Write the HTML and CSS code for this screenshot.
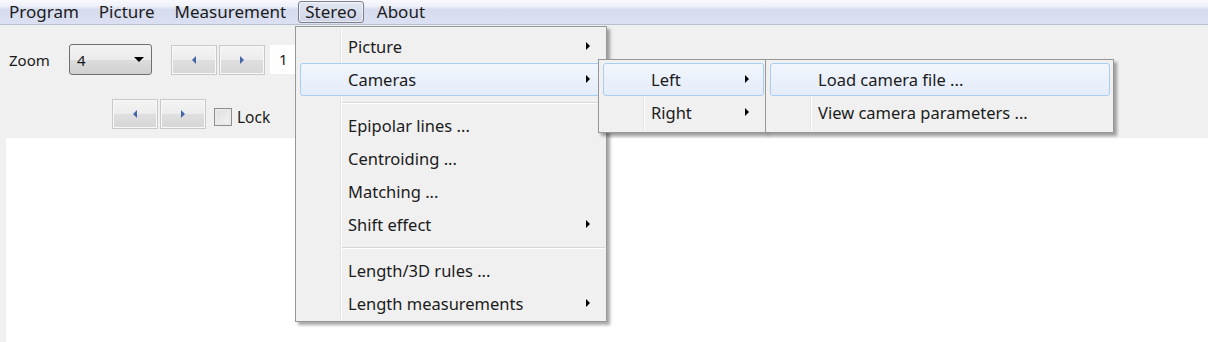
FILE: index.html
```html
<!DOCTYPE html>
<html>
<head>
    <meta charset="utf-8">
    <title>Stereo</title>
    <link rel="stylesheet" href="styles.css">
</head>
<body>
    <div class="menubar">
        <span class="menubar-item">Program</span>
        <span class="menubar-item">Picture</span>
        <span class="menubar-item">Measurement</span>
        <span class="menubar-item open">Stereo</span>
        <span class="menubar-item">About</span>
    </div>

    <div class="toolbar">
        <div class="tool-row">
            <span class="label">Zoom</span>
            <div class="combo">
                <span>4</span>
                <span class="combo-arrow"></span>
            </div>
            <div class="btn-group">
                <button class="nav-btn"><span class="tri left"></span></button>
                <button class="nav-btn"><span class="tri right"></span></button>
            </div>
            <div class="textbox">1</div>
        </div>
        <div class="tool-row second">
            <div class="btn-group">
                <button class="nav-btn"><span class="tri left"></span></button>
                <button class="nav-btn"><span class="tri right"></span></button>
            </div>
            <label class="check"><span class="box"></span>Lock</label>
        </div>
    </div>

    <div class="canvas"></div>

    <!-- Stereo dropdown -->
    <div class="menu main-menu">
        <div class="menu-item sub">Picture</div>
        <div class="menu-item sub active">Cameras</div>
        <div class="menu-sep"></div>
        <div class="menu-item">Epipolar lines ...</div>
        <div class="menu-item">Centroiding ...</div>
        <div class="menu-item">Matching ...</div>
        <div class="menu-item sub">Shift effect</div>
        <div class="menu-sep"></div>
        <div class="menu-item">Length/3D rules ...</div>
        <div class="menu-item sub">Length measurements</div>
    </div>

    <div class="menu cam-menu">
        <div class="menu-item sub active">Left</div>
        <div class="menu-item sub">Right</div>
    </div>

    <div class="menu left-menu">
        <div class="menu-item active">Load camera file ...</div>
        <div class="menu-item">View camera parameters ...</div>
    </div>
</body>
</html>
```

FILE: styles.css
```css
html, body {
    margin: 0;
    height: 100%;
    overflow: hidden;
}

body {
    font-family: "Noto Sans", "Open Sans", sans-serif;
    font-size: 16.5px;
    color: #1b1b1b;
    background-color: #f0f0f0;
    position: relative;
}

/* menu bar */
.menubar {
    display: flex;
    height: 24px;
    padding-left: 0;
    background: linear-gradient(#f7f9fc 0, #eef1f8 25%, #d6dcee 40%, #dbe1f2 100%);
    border-bottom: 1px solid #b8bfd2;
    font-size: 17px;
}

.menubar-item {
    display: flex;
    align-items: center;
    padding: 0 9px;
    margin: 1px 0;
    border: 1px solid transparent;
    border-radius: 3px;
    line-height: 20px;
}

.menubar-item:first-child {
    padding-left: 8px;
}

.menubar-item.open {
    border-color: #7f8188;
    background: linear-gradient(#e3e7f3, #cfd5e8);
    box-shadow: inset 0 0 0 1px rgba(255, 255, 255, 0.5);
    padding: 0 6px;
    margin: 1px 3px 1px 2px;
}

/* toolbar */
.toolbar {
    padding: 19px 0 0 0;
    height: 94px;
}

.tool-row {
    display: flex;
    align-items: center;
    height: 31px;
}

.tool-row.second {
    margin-top: 24px;
    padding-left: 112px;
    height: 30px;
}

.label {
    width: 60px;
    padding-left: 9px;
    font-size: 15px;
}

.combo {
    box-sizing: border-box;
    width: 83px;
    height: 31px;
    border: 1px solid #707070;
    border-radius: 3px;
    background: linear-gradient(#f2f2f2 0, #ebebeb 50%, #dddddd 51%, #cfcfcf 100%);
    display: flex;
    align-items: center;
    justify-content: space-between;
    padding: 0 7px 0 7px;
    font-size: 15px;
    margin-right: 19px;
}

.combo-arrow {
    width: 0;
    height: 0;
    border-left: 5px solid transparent;
    border-right: 5px solid transparent;
    border-top: 5px solid #000;
}

.btn-group {
    display: flex;
    gap: 2px;
}

.nav-btn {
    box-sizing: border-box;
    width: 46px;
    height: 30px;
    padding: 0;
    border: 1px solid #c9c9c9;
    border-radius: 0;
    background: linear-gradient(#f4f4f4 0, #ececec 50%, #dfdfdf 51%, #d6d6d6 100%);
    display: flex;
    align-items: center;
    justify-content: center;
    box-shadow: inset 0 0 0 1px #f8f8f8;
}

.tri {
    width: 0;
    height: 0;
    border-top: 4px solid transparent;
    border-bottom: 4px solid transparent;
}

.tri.left {
    border-right: 4px solid #4466a8;
}

.tri.right {
    border-left: 4px solid #4466a8;
}

.textbox {
    margin-left: 5px;
    width: 60px;
    height: 29px;
    background-color: #fff;
    font-size: 15px;
    line-height: 29px;
    padding-left: 9px;
    box-sizing: border-box;
}

.check {
    display: flex;
    align-items: center;
    margin: 5px 0 0 8px;
    font-size: 15.5px;
}

.box {
    box-sizing: border-box;
    width: 18px;
    height: 18px;
    border: 1px solid #8e8f8f;
    background: linear-gradient(135deg, #dcdcdc, #f6f6f6);
    box-shadow: inset 0 0 0 2px #e9e9e9;
    margin-right: 5px;
}

.canvas {
    margin-left: 6px;
    height: 220px;
    background-color: #fff;
}

/* popup menus */
.menu {
    position: absolute;
    box-sizing: border-box;
    background-color: #f0f0f0;
    border: 1px solid #979797;
    box-shadow: 3px 3px 3px rgba(0, 0, 0, 0.35);
    padding: 3px 1px 2px 4px;
}

.menu::before {
    content: "";
    position: absolute;
    top: 2px;
    bottom: 2px;
    left: 44px;
    width: 1px;
    background-color: #e2e3e3;
    border-right: 1px solid #fff;
}

.main-menu {
    left: 295px;
    top: 26px;
    width: 312px;
    height: 296px;
}

.cam-menu {
    left: 598px;
    top: 59px;
    width: 168px;
    height: 74px;
}

.left-menu {
    left: 765px;
    top: 59px;
    width: 349px;
    height: 74px;
    padding-right: 3px;
}

.menu-item {
    position: relative;
    height: 33px;
    line-height: 31px;
    box-sizing: border-box;
    padding-left: 47px;
    border: 1px solid transparent;
    border-radius: 3px;
}

.menu-item.active {
    border-color: #a9cdf3;
    background: linear-gradient(#f2f6fd, #e3ecf9);
}

.menu-item.sub::after {
    content: "";
    position: absolute;
    right: 14px;
    top: 11px;
    border-top: 4px solid transparent;
    border-bottom: 4px solid transparent;
    border-left: 4px solid #000;
}

.menu-sep {
    height: 1px;
    margin: 6px 0 5px 42px;
    background-color: #d7d7d7;
    border-bottom: 1px solid #fff;
}
```
